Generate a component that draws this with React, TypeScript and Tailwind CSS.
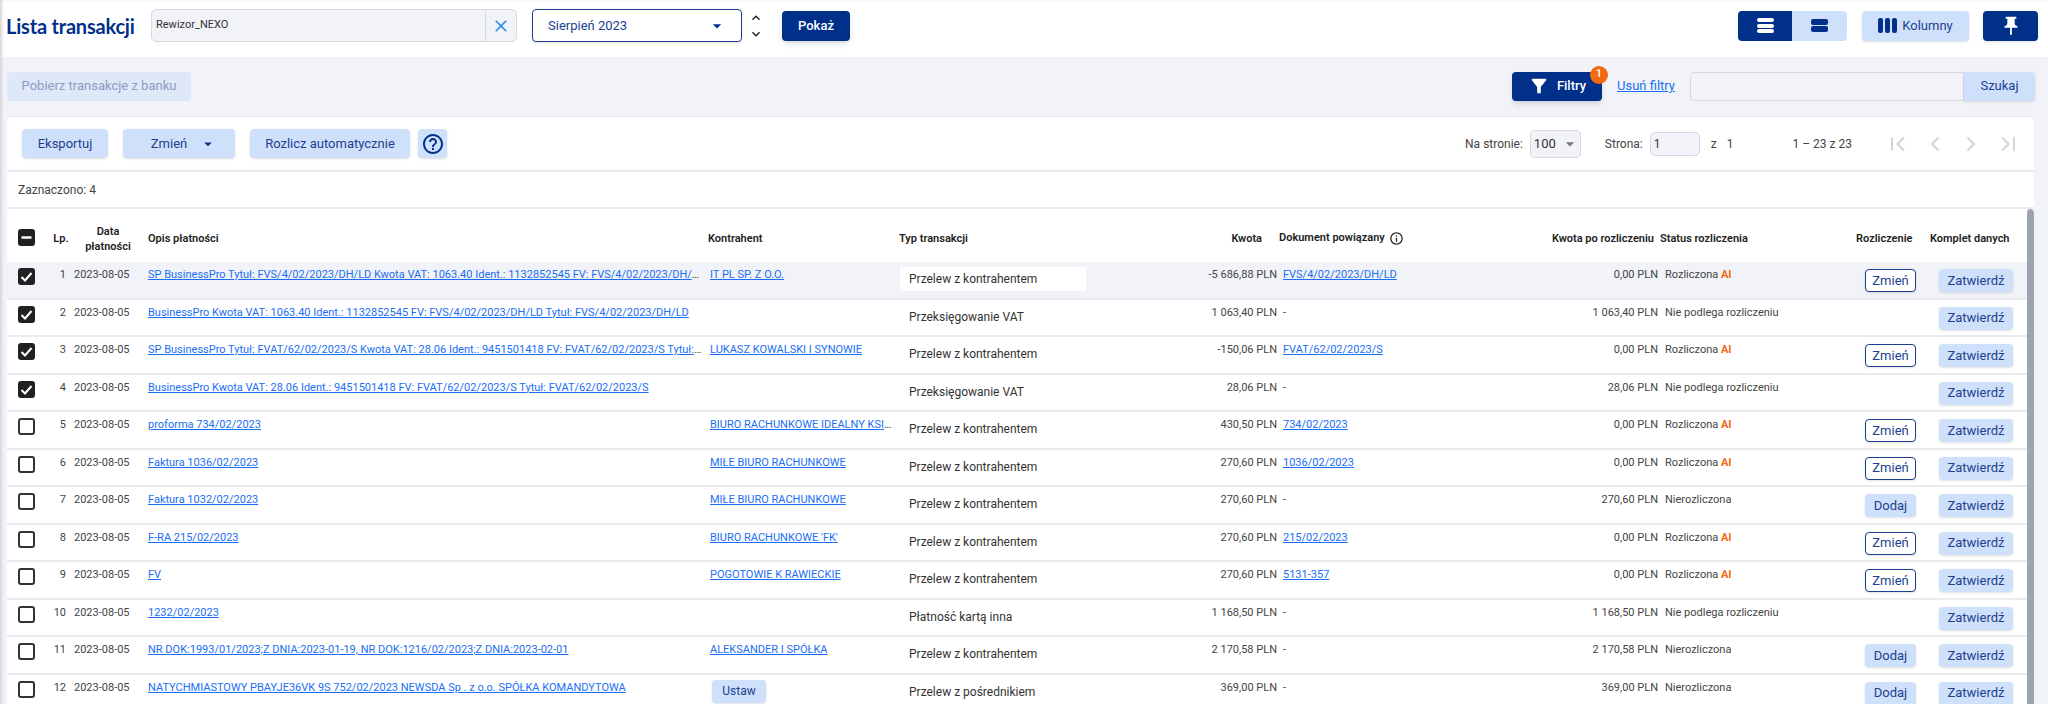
import { MdFilterAlt, MdHelpOutline, MdInfoOutline, MdPushPin, MdClose, MdArrowDropDown, MdKeyboardArrowUp, MdKeyboardArrowDown } from "react-icons/md";

const cols = "grid grid-cols-[41px_24px_72px_562px_190px_194px_189px_221px_160px_190px_75px_102px]";

type Row = {
  opis: string;
  kontrahent?: string;
  ustaw?: boolean;
  typ: string;
  kwota: string;
  dok?: string;
  po: string;
  status: string;
  ai?: boolean;
  akcja?: "Zmień" | "Dodaj";
  checked?: boolean;
};

const rows: Row[] = [
  { opis: "SP BusinessPro Tytuł: FVS/4/02/2023/DH/LD Kwota VAT: 1063.40 Ident.: 1132852545 FV: FVS/4/02/2023/DH/LD Tytuł: FVS/4/02/2023/DH/LD", kontrahent: "IT PL SP. Z O.O.", typ: "Przelew z kontrahentem", kwota: "-5 686,88 PLN", dok: "FVS/4/02/2023/DH/LD", po: "0,00 PLN", status: "Rozliczona", ai: true, akcja: "Zmień", checked: true },
  { opis: "BusinessPro Kwota VAT: 1063.40 Ident.: 1132852545 FV: FVS/4/02/2023/DH/LD Tytuł: FVS/4/02/2023/DH/LD", typ: "Przeksięgowanie VAT", kwota: "1 063,40 PLN", po: "1 063,40 PLN", status: "Nie podlega rozliczeniu", checked: true },
  { opis: "SP BusinessPro Tytuł: FVAT/62/02/2023/S Kwota VAT: 28.06 Ident.: 9451501418 FV: FVAT/62/02/2023/S Tytuł: FVAT/62/02/2023/S", kontrahent: "LUKASZ KOWALSKI I SYNOWIE", typ: "Przelew z kontrahentem", kwota: "-150,06 PLN", dok: "FVAT/62/02/2023/S", po: "0,00 PLN", status: "Rozliczona", ai: true, akcja: "Zmień", checked: true },
  { opis: "BusinessPro Kwota VAT: 28.06 Ident.: 9451501418 FV: FVAT/62/02/2023/S Tytuł: FVAT/62/02/2023/S", typ: "Przeksięgowanie VAT", kwota: "28,06 PLN", po: "28,06 PLN", status: "Nie podlega rozliczeniu", checked: true },
  { opis: "proforma 734/02/2023", kontrahent: "BIURO RACHUNKOWE IDEALNY KSIĘGOWY SP. Z O.O.", typ: "Przelew z kontrahentem", kwota: "430,50 PLN", dok: "734/02/2023", po: "0,00 PLN", status: "Rozliczona", ai: true, akcja: "Zmień" },
  { opis: "Faktura 1036/02/2023", kontrahent: "MIŁE BIURO RACHUNKOWE", typ: "Przelew z kontrahentem", kwota: "270,60 PLN", dok: "1036/02/2023", po: "0,00 PLN", status: "Rozliczona", ai: true, akcja: "Zmień" },
  { opis: "Faktura 1032/02/2023", kontrahent: "MIŁE BIURO RACHUNKOWE", typ: "Przelew z kontrahentem", kwota: "270,60 PLN", po: "270,60 PLN", status: "Nierozliczona", akcja: "Dodaj" },
  { opis: "F-RA 215/02/2023", kontrahent: "BIURO RACHUNKOWE 'FK'", typ: "Przelew z kontrahentem", kwota: "270,60 PLN", dok: "215/02/2023", po: "0,00 PLN", status: "Rozliczona", ai: true, akcja: "Zmień" },
  { opis: "FV", kontrahent: "POGOTOWIE K RAWIECKIE", typ: "Przelew z kontrahentem", kwota: "270,60 PLN", dok: "5131-357", po: "0,00 PLN", status: "Rozliczona", ai: true, akcja: "Zmień" },
  { opis: "1232/02/2023", typ: "Płatność kartą inna", kwota: "1 168,50 PLN", po: "1 168,50 PLN", status: "Nie podlega rozliczeniu" },
  { opis: "NR DOK:1993/01/2023;Z DNIA:2023-01-19, NR DOK:1216/02/2023;Z DNIA:2023-02-01", kontrahent: "ALEKSANDER I SPÓŁKA", typ: "Przelew z kontrahentem", kwota: "2 170,58 PLN", po: "2 170,58 PLN", status: "Nierozliczona", akcja: "Dodaj" },
  { opis: "NATYCHMIASTOWY PBAYJE36VK 9S 752/02/2023 NEWSDA Sp . z o.o. SPÓŁKA KOMANDYTOWA", ustaw: true, typ: "Przelew z pośrednikiem", kwota: "369,00 PLN", po: "369,00 PLN", status: "Nierozliczona", akcja: "Dodaj" },
];

function Checkbox({ checked, mixed }: { checked?: boolean; mixed?: boolean }) {
  if (mixed || checked) {
    return (
      <span className="flex h-[17px] w-[17px] items-center justify-center rounded-[3px] bg-[#212121]">
        <svg viewBox="0 0 17 17" className="h-[17px] w-[17px]" fill="none" stroke="#fff" strokeWidth="2">
          {mixed ? <path d="M3.5 8.5h10" strokeWidth="2.5" /> : <path d="M3.5 9l3.5 3.5L13.5 5" />}
        </svg>
      </span>
    );
  }
  return <span className="block h-[17px] w-[17px] rounded-[3px] border-2 border-[#333]" />;
}

function LightButton({ children, className }: { children: React.ReactNode; className?: string }) {
  return (
    <button className={`flex items-center justify-center rounded-[4px] bg-[#cfe0fb] text-[#1d3f8f] shadow-sm ${className ?? ""}`}>
      {children}
    </button>
  );
}

function PagerIcon({ d }: { d: string }) {
  return (
    <svg viewBox="0 0 26 26" className="h-[26px] w-[26px]" fill="none" stroke="#d2d4d8" strokeWidth="2">
      <path d={d} />
    </svg>
  );
}

function TableRow({ row, index }: { row: Row; index: number }) {
  return (
    <div className={`${cols} h-[37.5px] border-b-2 border-[#e9ebef] text-[11px] text-[#444] ${index === 0 ? "bg-[#f1f3f8]" : ""}`}>
      <div className="pl-[11px] pt-[6px]"><Checkbox checked={row.checked} /></div>
      <div className="pt-[5px] pr-[6px] text-right leading-[16px]">{index + 1}</div>
      <div className="pl-[2px] pt-[5px] leading-[16px]">2023-08-05</div>
      <div className="truncate pl-1 pr-1 pt-[5px] leading-[16px]">
        <a className="text-[#1a6ef5] underline">{row.opis}</a>
      </div>
      <div className="truncate pl-1 pr-1 pt-[5px] leading-[16px]">
        {row.kontrahent && <a className="text-[#1a6ef5] underline">{row.kontrahent}</a>}
        {row.ustaw && <LightButton className="ml-[2px] h-[23px] w-[54px] text-[12px]">Ustaw</LightButton>}
      </div>
      <div className="pl-[4px] pt-[5px]">
        <div className={`h-[24px] w-[186px] pl-[9px] text-[12px] leading-[24px] text-[#333] ${index === 0 ? "bg-white" : ""}`}>{row.typ}</div>
      </div>
      <div className="pr-[2px] pt-[5px] text-right leading-[16px]">{row.kwota}</div>
      <div className="pl-1 pt-[5px] leading-[16px]">
        {row.dok ? <a className="text-[#1a6ef5] underline">{row.dok}</a> : "-"}
      </div>
      <div className="pr-[2px] pt-[5px] text-right leading-[16px]">{row.po}</div>
      <div className="pl-[5px] pt-[5px] leading-[16px]">
        {row.status}
        {row.ai && <span className="font-bold text-[#f26a0f]"> AI</span>}
      </div>
      <div className="pl-[15px] pt-[7px]">
        {row.akcja === "Zmień" && (
          <button className="h-[23px] w-[51px] rounded-[4px] border border-[#1d3f8f] bg-white text-[13px] text-[#1d3f8f] shadow-sm">Zmień</button>
        )}
        {row.akcja === "Dodaj" && <LightButton className="h-[23px] w-[51px] text-[13px]">Dodaj</LightButton>}
      </div>
      <div className="pl-[14px] pt-[7px]">
        <LightButton className="h-[23px] w-[74px] text-[13px]">Zatwierdź</LightButton>
      </div>
    </div>
  );
}

export default function App() {
  return (
    <div className="relative flex h-[704px] w-[2048px] flex-col overflow-hidden bg-[#f1f3f8] font-['Roboto',sans-serif]">
      {/* top bar */}
      <div className="flex h-[57px] shrink-0 items-center border-t-2 border-[#f7f7f9] bg-white pl-[6px] pr-[10px] pb-[8px]">
        <h1 className="w-[145px] whitespace-nowrap font-['Lato',sans-serif] text-[20px] font-bold tracking-[-0.2px] text-[#00308a]">Lista transakcji</h1>
        <div className="flex h-[33px] w-[366px] items-center rounded-[5px] border border-[#d5d8de] bg-[#f1f3f8] text-[11px] text-[#333]">
          <span className="flex-1 pl-1">Rewizor_NEXO</span>
          <span className="flex h-full w-[31px] items-center justify-center border-l border-[#d5d8de] text-[#2f8fe8]"><MdClose size={20} /></span>
        </div>
        <div className="ml-[15px] flex h-[33px] w-[210px] items-center justify-between rounded-[4px] border border-[#1d3f8f] pl-[15px] pr-[20px] text-[13px] text-[#1d3f8f] shadow-sm">
          Sierpień 2023
          <MdArrowDropDown size={20} className="-mr-[6px] text-[#00308a]" />
        </div>
        <div className="ml-[5px] flex w-[18px] flex-col items-center text-[#222]">
          <MdKeyboardArrowUp size={16} />
          <MdKeyboardArrowDown size={16} />
        </div>
        <button className="ml-[17px] h-[30px] w-[68px] rounded-[4px] bg-[#00308a] text-[13px] font-medium text-white shadow-md">Pokaż</button>
        <div className="ml-auto flex h-[30px] overflow-hidden rounded-[4px]">
          <span className="flex w-[54px] items-center justify-center bg-[#00308a]">
            <span className="flex flex-col gap-[1.5px]">
              <span className="block h-[4px] w-[17px] rounded-[2px] bg-white" />
              <span className="block h-[4px] w-[17px] rounded-[2px] bg-white" />
              <span className="block h-[4px] w-[17px] rounded-[2px] bg-white" />
            </span>
          </span>
          <span className="flex w-[55px] items-center justify-center bg-[#cfe0fb]">
            <span className="flex flex-col gap-[1.5px]">
              <span className="block h-[6px] w-[17px] rounded-[2px] bg-[#00308a]" />
              <span className="block h-[6px] w-[17px] rounded-[2px] bg-[#00308a]" />
            </span>
          </span>
        </div>
        <LightButton className="ml-[15px] h-[30px] w-[107px] gap-[5px] text-[13px]">
          <span className="flex gap-[2px]">
            <span className="block h-[15px] w-[5px] rounded-[2px] bg-[#00308a]" />
            <span className="block h-[15px] w-[5px] rounded-[2px] bg-[#00308a]" />
            <span className="block h-[15px] w-[5px] rounded-[2px] bg-[#00308a]" />
          </span>
          Kolumny
        </LightButton>
        <button className="ml-[14px] flex h-[30px] w-[55px] items-center justify-center rounded-[4px] bg-[#00308a] text-white shadow-sm"><MdPushPin size={22} /></button>
      </div>

      {/* filters row */}
      <div className="flex h-[59px] shrink-0 items-center pb-[1px] pl-[7px] pr-[13px]">
        <button className="h-[29px] w-[184px] rounded-[4px] bg-[#dfe8f8] text-[13px] text-[#8d9cc0]">Pobierz transakcje z banku</button>
        <div className="relative ml-auto flex h-[29px] w-[90px] items-center justify-center gap-[7px] rounded-[4px] bg-[#00308a] text-[13px] font-medium text-white shadow-md">
          <MdFilterAlt size={22} />
          Filtry
          <span className="absolute -right-[6px] -top-[6px] flex h-[18px] w-[18px] items-center justify-center rounded-full bg-[#f26a0f] text-[11px] font-medium">1</span>
        </div>
        <a className="ml-[15px] text-[13px] text-[#1a6ef5] underline">Usuń filtry</a>
        <div className="ml-[15px] h-[29px] w-[274px] rounded-l-[4px] border border-[#d5d8de] bg-[#f1f3f8]" />
        <LightButton className="h-[29px] w-[71px] rounded-l-none text-[13px] shadow-none">Szukaj</LightButton>
      </div>

      {/* card */}
      <div className="ml-[7px] flex w-[2027px] flex-1 flex-col overflow-hidden rounded-t-[4px] border-t border-[#e6e8ed] bg-white">
        <div className="flex h-[55px] shrink-0 items-center border-b-2 border-[#e9ebef] pl-[15px] pr-[13px] text-[13px]">
          <LightButton className="h-[29px] w-[86px]">Eksportuj</LightButton>
          <LightButton className="ml-[15px] h-[29px] w-[112px] gap-[12px] pl-[10px]">Zmień <MdArrowDropDown size={18} className="text-[#00308a]" /></LightButton>
          <LightButton className="ml-[15px] h-[29px] w-[160px]">Rozlicz automatycznie</LightButton>
          <LightButton className="ml-2 h-[29px] w-[29px]"><MdHelpOutline size={24} className="text-[#00308a]" /></LightButton>

          <span className="ml-auto text-[12px] text-[#444]">Na stronie:</span>
          <div className="ml-[7px] flex h-[28px] w-[51px] items-center justify-between rounded-[5px] border border-[#d5d8de] bg-[#f1f3f8] pl-[3px] text-[13px] text-[#333]">
            100
            <MdArrowDropDown size={20} className="text-[#777]" />
          </div>
          <span className="ml-6 text-[12px] text-[#444]">Strona:</span>
          <div className="ml-[7px] h-[24px] w-[50px] rounded-[5px] border border-[#d5d8de] bg-[#f1f3f8] pl-[3px] text-[12px] leading-[22px] text-[#333]">1</div>
          <span className="ml-[11px] text-[12px] text-[#444]">z</span>
          <span className="ml-[10px] text-[12px] text-[#444]">1</span>
          <span className="ml-[59px] text-[12px] text-[#444]">1 – 23 z 23</span>
          <span className="ml-[33px] flex gap-[10.7px]">
            <PagerIcon d="M7 6.5v13M19 6.5L12.5 13l6.5 6.5" />
            <PagerIcon d="M16.5 6.5L10 13l6.5 6.5" />
            <PagerIcon d="M9.5 6.5L16 13l-6.5 6.5" />
            <PagerIcon d="M19 6.5v13M7 6.5l6.5 6.5L7 19.5" />
          </span>
        </div>
        <div className="flex h-[37px] shrink-0 items-center border-b-2 border-[#e9ebef] pl-[11px] pt-[1px] text-[12px] text-[#444]">Zaznaczono: 4</div>

        <div className="flex flex-1 overflow-hidden">
          <div className="w-[2020px] shrink-0">
            {/* header */}
            <div className={`${cols} h-[53px] items-center pt-[8px] text-[11px] font-semibold text-[#222]`}>
              <div className="-mt-[4px] pl-[11px]"><Checkbox mixed /></div>
              <div className="pl-[2px] text-center">Lp.</div>
              <div className="-mt-[1px] text-center leading-[15px]">Data<br />płatności</div>
              <div className="pl-1">Opis płatności</div>
              <div className="pl-[2px]">Kontrahent</div>
              <div className="pl-[3px]">Typ transakcji</div>
              <div className="pr-[17px] text-right">Kwota</div>
              <div className="-mt-[2px] flex items-center gap-1">Dokument powiązany <MdInfoOutline size={15} /></div>
              <div className="pr-[6px] text-right">Kwota po rozliczeniu</div>
              <div>Status rozliczenia</div>
              <div className="pl-[6px]">Rozliczenie</div>
              <div className="pl-[5px]">Komplet danych</div>
            </div>
            {rows.map((row, i) => (
              <TableRow key={i} row={row} index={i} />
            ))}
          </div>
          <div className="w-[7px] shrink-0 rounded-t-[4px] bg-[#9ea4af]" />
        </div>
      </div>

      {/* left edge shadow */}
      <div className="absolute bottom-0 left-0 top-0 w-[4px] bg-gradient-to-r from-[#d5d6da] to-transparent" />
    </div>
  );
}
